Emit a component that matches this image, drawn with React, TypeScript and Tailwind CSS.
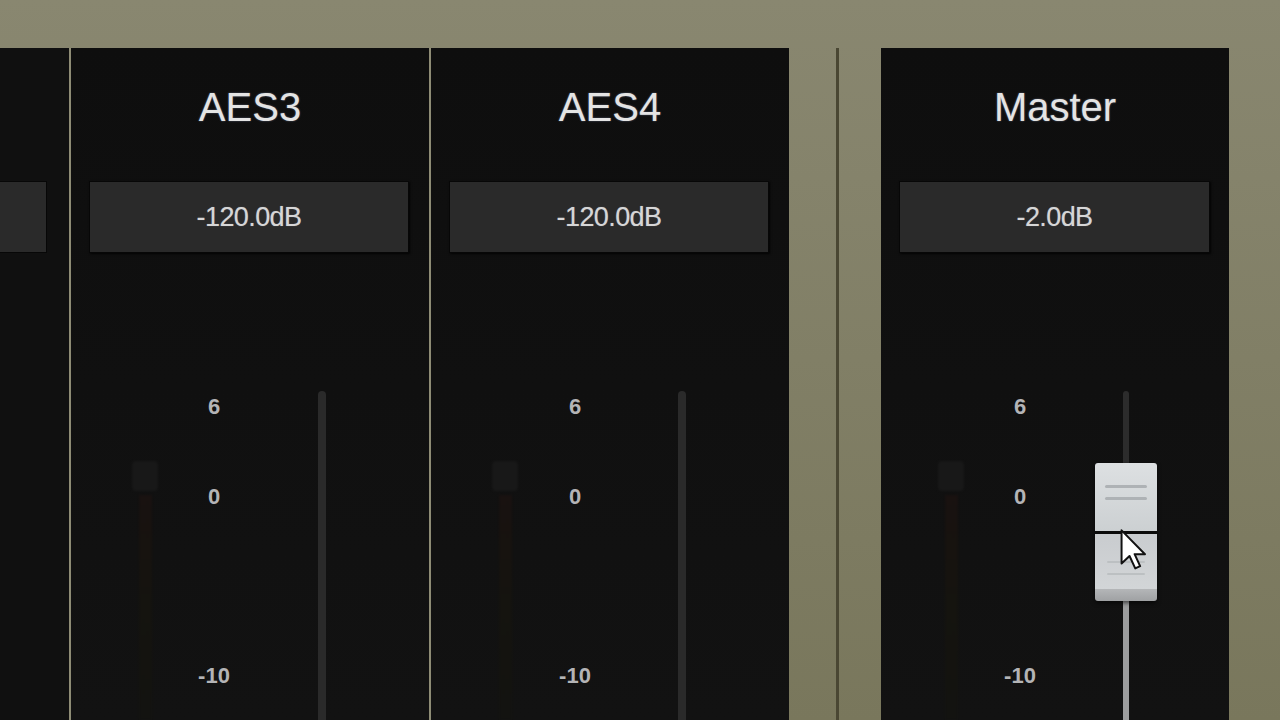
import React from 'react';

type StripProps = {
  name: string;
  value: string;
  width: string;
  boxMargin: string;
  meterLeft: string;
  scaleWidth: string;
  trackGap: string;
  master?: boolean;
};

function Cursor() {
  return (
    <svg className="absolute left-[25px] top-[66px] w-[27px] h-[42px]" viewBox="0 0 12 19">
      <path d="M0.6 0.6 L0.6 15.6 L4.2 12.2 L6.8 17.8 L9 16.8 L6.5 11.4 L11.2 11.4 Z" fill="#ffffff" stroke="#111111" strokeWidth="0.9" strokeLinejoin="round" />
    </svg>
  );
}

function Knob() {
  return (
    <div className="absolute left-[-27px] top-[210px] w-[62px] h-[138px] rounded-[3px] overflow-hidden flex flex-col shadow-[0_2px_4px_rgba(0,0,0,0.6)]">
      <div className="h-[68px] bg-gradient-to-b from-[#dde0e2] to-[#ccd0d2] flex flex-col items-center pt-[22px] gap-[9px]">
        <div className="w-[42px] h-[3px] rounded-full bg-[#aeb2b5]" />
        <div className="w-[42px] h-[3px] rounded-full bg-[#aeb2b5]" />
      </div>
      <div className="h-[3px] bg-[#0b0b0b]" />
      <div className="flex-1 bg-gradient-to-b from-[#c9cccf] to-[#d2d5d7] flex flex-col items-center pt-[27px] gap-[10px]">
        <div className="w-[38px] h-[2px] rounded-full bg-[#bcc0c2]" />
        <div className="w-[38px] h-[2px] rounded-full bg-[#bcc0c2]" />
      </div>
      <div className="h-[12px] bg-gradient-to-b from-[#b4b6b8] to-[#9fa1a3]" />
      <Cursor />
    </div>
  );
}

function Strip({ name, value, width, boxMargin, meterLeft, scaleWidth, trackGap, master }: StripProps) {
  return (
    <div className={`${width} h-full bg-gradient-to-b from-[#0e0e0e] to-[#121212] flex flex-col`}>
      <div className="h-[118px] flex items-center justify-center text-[40px] leading-none text-[#e4e4e4] [text-shadow:0_0_2px_rgba(160,180,220,0.5)]">
        {name}
      </div>
      <div className={`${boxMargin} mt-[15px] h-[72px] bg-[#2a2a2a] border border-[#070707] shadow-[1px_1px_2px_rgba(0,0,0,0.8)] flex items-center justify-center text-[27px] tracking-[-0.6px] text-[#d6d6d6] [text-shadow:0_0_1px_rgba(200,210,230,0.5)]`}>
        {value}
      </div>
      <div className={`flex-1 flex ${meterLeft}`}>
        <div className="w-[24px] pt-[208px] flex flex-col items-center">
          <div className="w-[26px] h-[30px] rounded-[4px] bg-[#181818] blur-[1px]" />
          <div className="mt-[4px] w-[13px] flex-1 bg-gradient-to-b from-[#191210] via-[#15140f] to-[#131310] blur-[1px]" />
        </div>
        <div className={`${scaleWidth} relative text-[22px] leading-[22px] font-bold text-[#b4b4b6]`}>
          <div className="absolute inset-x-0 top-[143px] text-center">6</div>
          <div className="absolute inset-x-0 top-[233px] text-center">0</div>
          <div className="absolute inset-x-0 top-[412px] text-center">-10</div>
        </div>
        <div className={`${trackGap} relative w-[8px] pt-[138px] flex flex-col`}>
          {master ? (
            <>
              <div className="h-[80px] mx-[1px] rounded-t-full bg-[#2c2c2c]" />
              <div className="flex-1 mx-[1px] bg-[#9c9d9e]" />
              <Knob />
            </>
          ) : (
            <div className="flex-1 rounded-t-full bg-[#2a2a2a]" />
          )}
        </div>
      </div>
    </div>
  );
}

export default function App() {
  return (
    <div className="w-[1280px] h-[720px] overflow-hidden bg-gradient-to-b from-[#898770] to-[#79775c] flex pt-[48px] font-['Liberation_Sans',Arial,sans-serif]">
      <div className="w-[69px] h-full bg-[#101010] flex flex-col">
        <div className="h-[118px]" />
        <div className="mt-[15px] h-[72px] w-[47px] bg-[#2a2a2a] border border-[#070707] border-l-0" />
      </div>
      <div className="w-[2px] h-full bg-[#8e8c75]" />
      <Strip
        name="AES3"
        value="-120.0dB"
        width="w-[358px]"
        boxMargin="ml-[18px] mr-[20px]"
        meterLeft="pl-[62px]"
        scaleWidth="w-[114px]"
        trackGap="ml-[47px]"
      />
      <div className="w-[2px] h-full bg-[#8e8c75]" />
      <Strip
        name="AES4"
        value="-120.0dB"
        width="w-[358px]"
        boxMargin="ml-[18px] mr-[20px]"
        meterLeft="pl-[62px]"
        scaleWidth="w-[116px]"
        trackGap="ml-[45px]"
      />
      <div className="w-[47px]" />
      <div className="w-[3px] h-full bg-[#4a4733]" />
      <div className="w-[42px]" />
      <Strip
        name="Master"
        value="-2.0dB"
        width="w-[348px]"
        boxMargin="ml-[18px] mr-[19px]"
        meterLeft="pl-[58px]"
        scaleWidth="w-[114px]"
        trackGap="ml-[45px]"
        master
      />
    </div>
  );
}
